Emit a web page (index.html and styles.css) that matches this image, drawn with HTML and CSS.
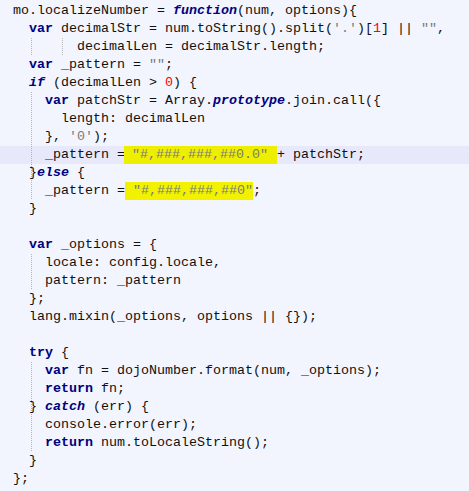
FILE: index.html
```html
<!DOCTYPE html>
<html>
<head>
<meta charset="utf-8">
<link rel="stylesheet" href="styles.css">
</head>
<body>
<div class="code">
<div class="line">mo.localizeNumber = <span class="kw it">function</span>(num, options){</div>
<div class="line">  <span class="kw">var</span> decimalStr = num.toString().split(<span class="str">'.'</span>)[<span class="num">1</span>] || <span class="str">""</span>,</div>
<div class="line g1 g2">        decimalLen = decimalStr.length;</div>
<div class="line">  <span class="kw">var</span> _pattern = <span class="str">""</span>;</div>
<div class="line">  <span class="kw it">if</span> (decimalLen &gt; <span class="num">0</span>) {</div>
<div class="line g1">    <span class="kw">var</span> patchStr = Array.<span class="kw it">prototype</span>.join.call({</div>
<div class="line g1">      length: decimalLen</div>
<div class="line g1">    }, <span class="str">'0'</span>);</div>
<div class="line g1 cur">    _pattern =<span class="mark mark1"> <span class="str">"#,###,###,##0.0"</span> </span>+ patchStr;</div>
<div class="line g1">  }<span class="kw it">else</span> {</div>
<div class="line g1">    _pattern =<span class="mark mark2"> <span class="str">"#,###,###,##0"</span></span>;</div>
<div class="line">  }</div>
<div class="line"> </div>
<div class="line">  <span class="kw">var</span> _options = {</div>
<div class="line g1">    locale: config.locale,</div>
<div class="line g1">    pattern: _pattern</div>
<div class="line">  };</div>
<div class="line">  lang.mixin(_options, options || {});</div>
<div class="line"> </div>
<div class="line">  <span class="kw">try</span> {</div>
<div class="line g1">    <span class="kw">var</span> fn = dojoNumber.format(num, _options);</div>
<div class="line g1">    <span class="kw">return</span> fn;</div>
<div class="line g1">  } <span class="kw it">catch</span> (err) {</div>
<div class="line g1">    console.error(err);</div>
<div class="line g1">    <span class="kw">return</span> num.toLocaleString();</div>
<div class="line">  }</div>
<div class="line">};</div>
</div>
</body>
</html>
```
FILE: styles.css
```css
html, body {
  margin: 0;
  padding: 0;
  background: #f2f5fe;
}
.code {
  padding-top: 2px;
  font-family: "Liberation Mono", "Courier New", monospace;
  font-size: 13.33px;
  color: #101010;
}
.line {
  height: 18px;
  line-height: 18px;
  padding-left: 13px;
  white-space: pre;
  background-repeat: no-repeat;
}
.g1 {
  background-image: repeating-linear-gradient(to bottom, #b4b4b4 0 1px, transparent 1px 2px);
  background-size: 1px 100%;
  background-position: 31px 0;
}
.g1.g2 {
  background-image:
    repeating-linear-gradient(to bottom, #b4b4b4 0 1px, transparent 1px 2px),
    repeating-linear-gradient(to bottom, #b4b4b4 0 1px, transparent 1px 2px);
  background-size: 1px 100%, 1px 100%;
  background-position: 31px 0, 62px 0;
}
.g1.cur {
  background-image:
    repeating-linear-gradient(to bottom, #b4b4b4 0 1px, transparent 1px 2px),
    linear-gradient(#e7e9fa, #e7e9fa);
  background-size: 1px 100%, 100% 100%;
  background-position: 31px 0, 0 0;
}
.kw {
  color: #000080;
  font-weight: bold;
}
.it {
  font-style: italic;
}
.str {
  color: #7a7a7a;
}
.num {
  color: #ff0000;
}
.mark {
  display: inline-block;
  background: #eeee00;
  line-height: 18px;
  height: 18px;
}
.mark1 {
  margin-left: -1px;
  padding-left: 0px;
  padding-right: 1px;
}
.mark2 {
  margin-left: -0px;
  padding-right: 0;
  background: #f2f200;
}
```
